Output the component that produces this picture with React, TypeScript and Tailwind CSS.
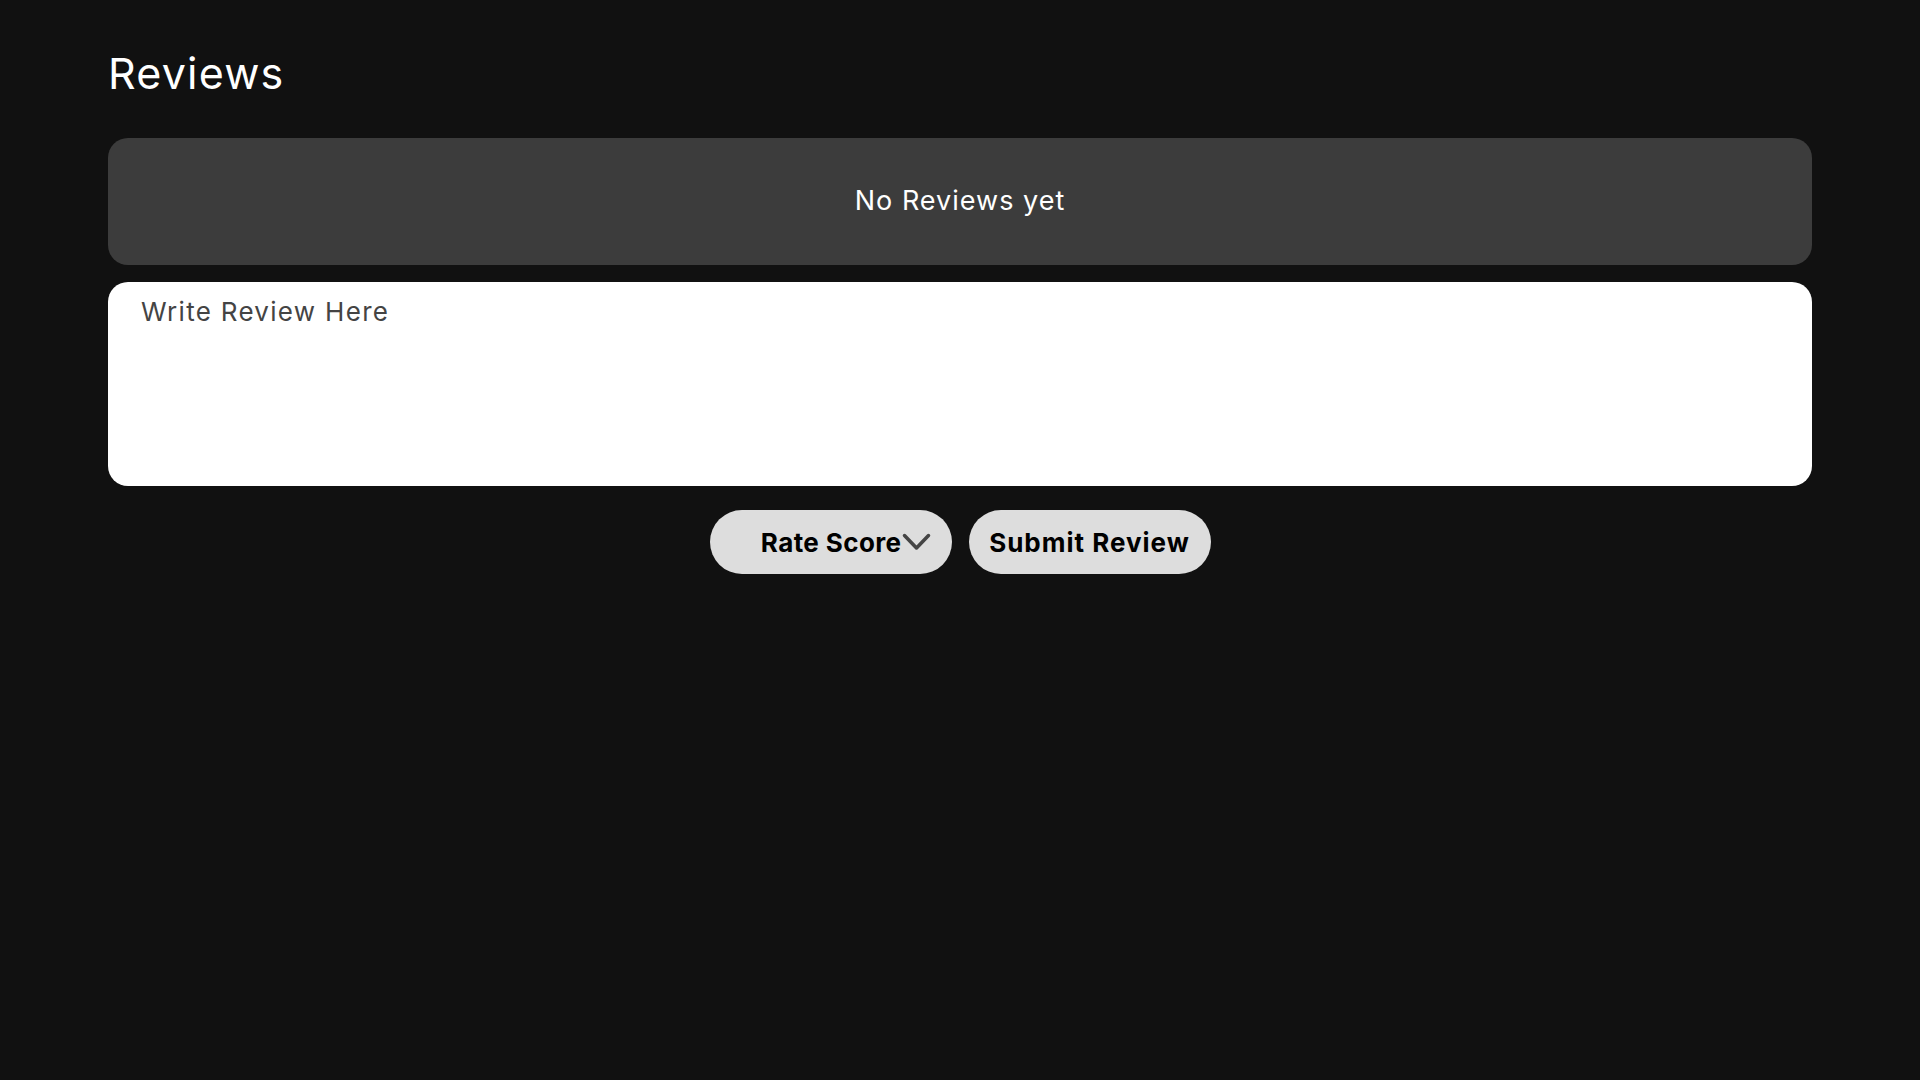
import React from "react";

export default function App() {
  return (
    <div
      className="min-h-[1080px] w-full bg-[#111111] px-[108px] pt-[51px]"
      style={{ fontFamily: "Inter, 'Open Sans', sans-serif" }}
    >
      <h1 className="text-[43px] leading-[44px] font-normal tracking-[1.2px] text-white">Reviews</h1>
      <div className="mt-[43px] flex h-[127px] items-center justify-center rounded-[20px] bg-[#3c3c3c]">
        <span className="text-[27px] tracking-[1px] text-white">No Reviews yet</span>
      </div>
      <textarea
        className="mt-[17px] block h-[204px] w-full resize-none rounded-[20px] bg-white px-[33px] pt-[14px] text-[26px] leading-[32px] tracking-[1.3px] text-[#333] placeholder:text-[#444] outline-none"
        placeholder="Write Review Here"
      />
      <div className="mt-[24px] flex justify-center gap-[17px]">
        <button className="flex h-[64px] w-[242px] items-center justify-end gap-0 rounded-full bg-[#dddddd] pr-[21px] text-[26px] font-bold tracking-[0.4px] text-black">
          <span>Rate Score</span>
          <svg width="29" height="18" viewBox="0 0 29 18" fill="none">
            <path d="M2.5 2.5 L14.5 15 L26.5 2.5" stroke="#444" strokeWidth="3.5" strokeLinecap="round" strokeLinejoin="round" />
          </svg>
        </button>
        <button className="flex h-[64px] w-[242px] items-center justify-center rounded-full bg-[#dddddd] text-[26px] font-bold tracking-[1px] text-black">
          Submit Review
        </button>
      </div>
    </div>
  );
}
